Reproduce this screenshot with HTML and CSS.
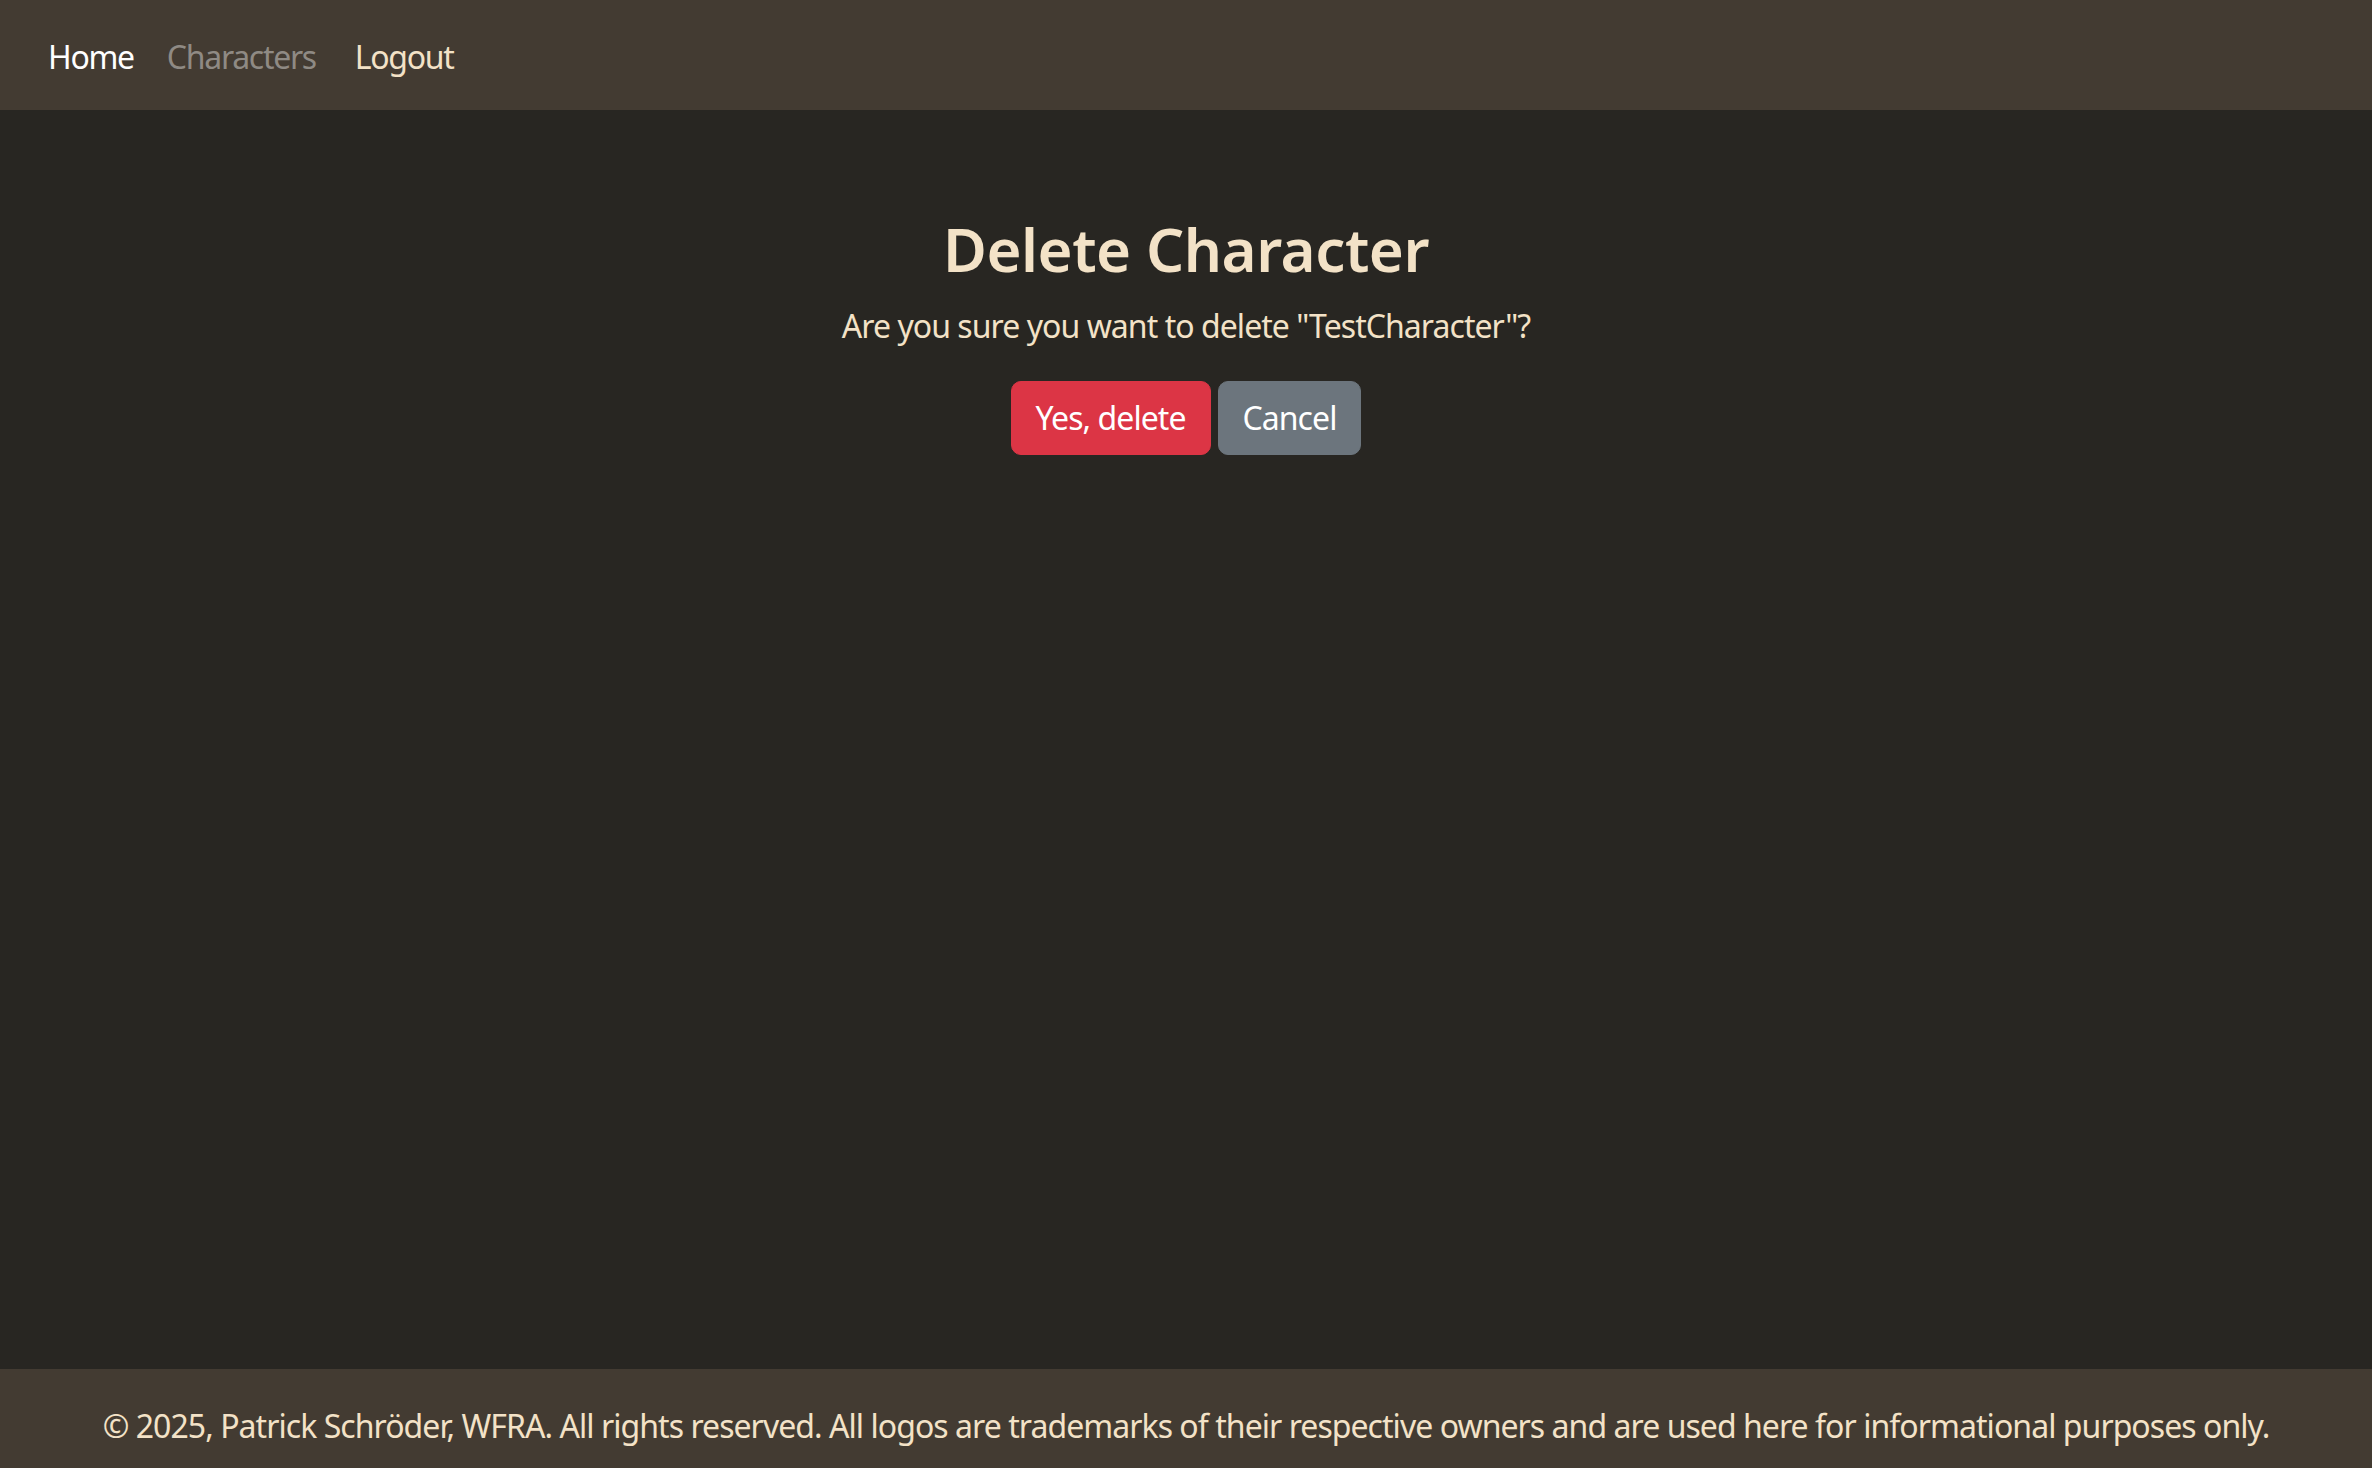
FILE: index.html
```html
<!DOCTYPE html>
<html lang="en">
<head>
<meta charset="utf-8">
<title>Delete Character</title>
<link rel="stylesheet" href="styles.css">
</head>
<body>
<header class="navbar">
  <nav class="nav">
    <a class="nav-link nav-home" href="#">Home</a>
    <a class="nav-link nav-muted" href="#">Characters</a>
    <form class="logout-form">
      <button type="button" class="nav-link nav-logout">Logout</button>
    </form>
  </nav>
</header>
<main class="main">
  <h1 class="title">Delete Character</h1>
  <p class="question">Are you sure you want to delete "TestCharacter"?</p>
  <div class="actions">
    <button type="button" class="btn btn-danger">Yes, delete</button>
    <button type="button" class="btn btn-secondary">Cancel</button>
  </div>
</main>
<footer class="footer">
  <p class="footer-text">© 2025, Patrick Schröder, WFRA. All rights reserved. All logos are trademarks of their respective owners and are used here for informational purposes only.</p>
</footer>
</body>
</html>
```
FILE: styles.css
```css
html, body {
  margin: 0;
  padding: 0;
}
body {
  min-height: 100vh;
  display: flex;
  flex-direction: column;
  background: #282622;
  color: #f3e2c7;
  font-family: "Noto Sans", "Open Sans", sans-serif;
  font-size: 32px;
  line-height: 1.5;
  letter-spacing: -0.95px;
}
.navbar {
  background: #433b32;
  height: 110px;
  box-sizing: border-box;
  padding: 33px 0 0 48px;
}
.nav {
  display: flex;
  align-items: flex-start;
}
.nav-link {
  font-family: inherit;
  font-size: 32px;
  line-height: 48px;
  letter-spacing: -1.3px;
  text-decoration: none;
  padding: 0;
  margin: 0;
  background: none;
  border: 0;
}
.nav-home {
  color: #ffffff;
  margin-right: 33px;
}
.nav-muted {
  color: #8f8a84;
  margin-right: 39px;
}
.logout-form {
  margin: 0;
}
.nav-logout {
  color: #f3e2c7;
  margin-top: -1px;
  cursor: pointer;
}
.main {
  flex: 1;
  display: flex;
  flex-direction: column;
  align-items: center;
  padding-top: 103px;
}
.title {
  margin: 0;
  font-size: 60px;
  font-weight: 600;
  line-height: 72px;
  letter-spacing: -0.45px;
}
.question {
  margin: 17px 0 0;
  font-size: 32px;
  line-height: 48px;
}
.actions {
  margin-top: 31px;
  display: flex;
  gap: 7px;
}
.btn {
  font-family: inherit;
  font-size: 32px;
  line-height: 48px;
  letter-spacing: -0.95px;
  padding: 12px 24px;
  border: 1px solid transparent;
  border-radius: 10px;
  color: #ffffff;
  cursor: pointer;
}
.btn-danger {
  background: #dc3545;
  border-color: #dc3545;
}
.btn-secondary {
  background: #6c757d;
  border-color: #6c757d;
}
.footer {
  background: #433b32;
  height: 99px;
  box-sizing: border-box;
  padding-top: 33px;
  text-align: center;
}
.footer-text {
  margin: 0;
  font-size: 32px;
  line-height: 48px;
}
```
